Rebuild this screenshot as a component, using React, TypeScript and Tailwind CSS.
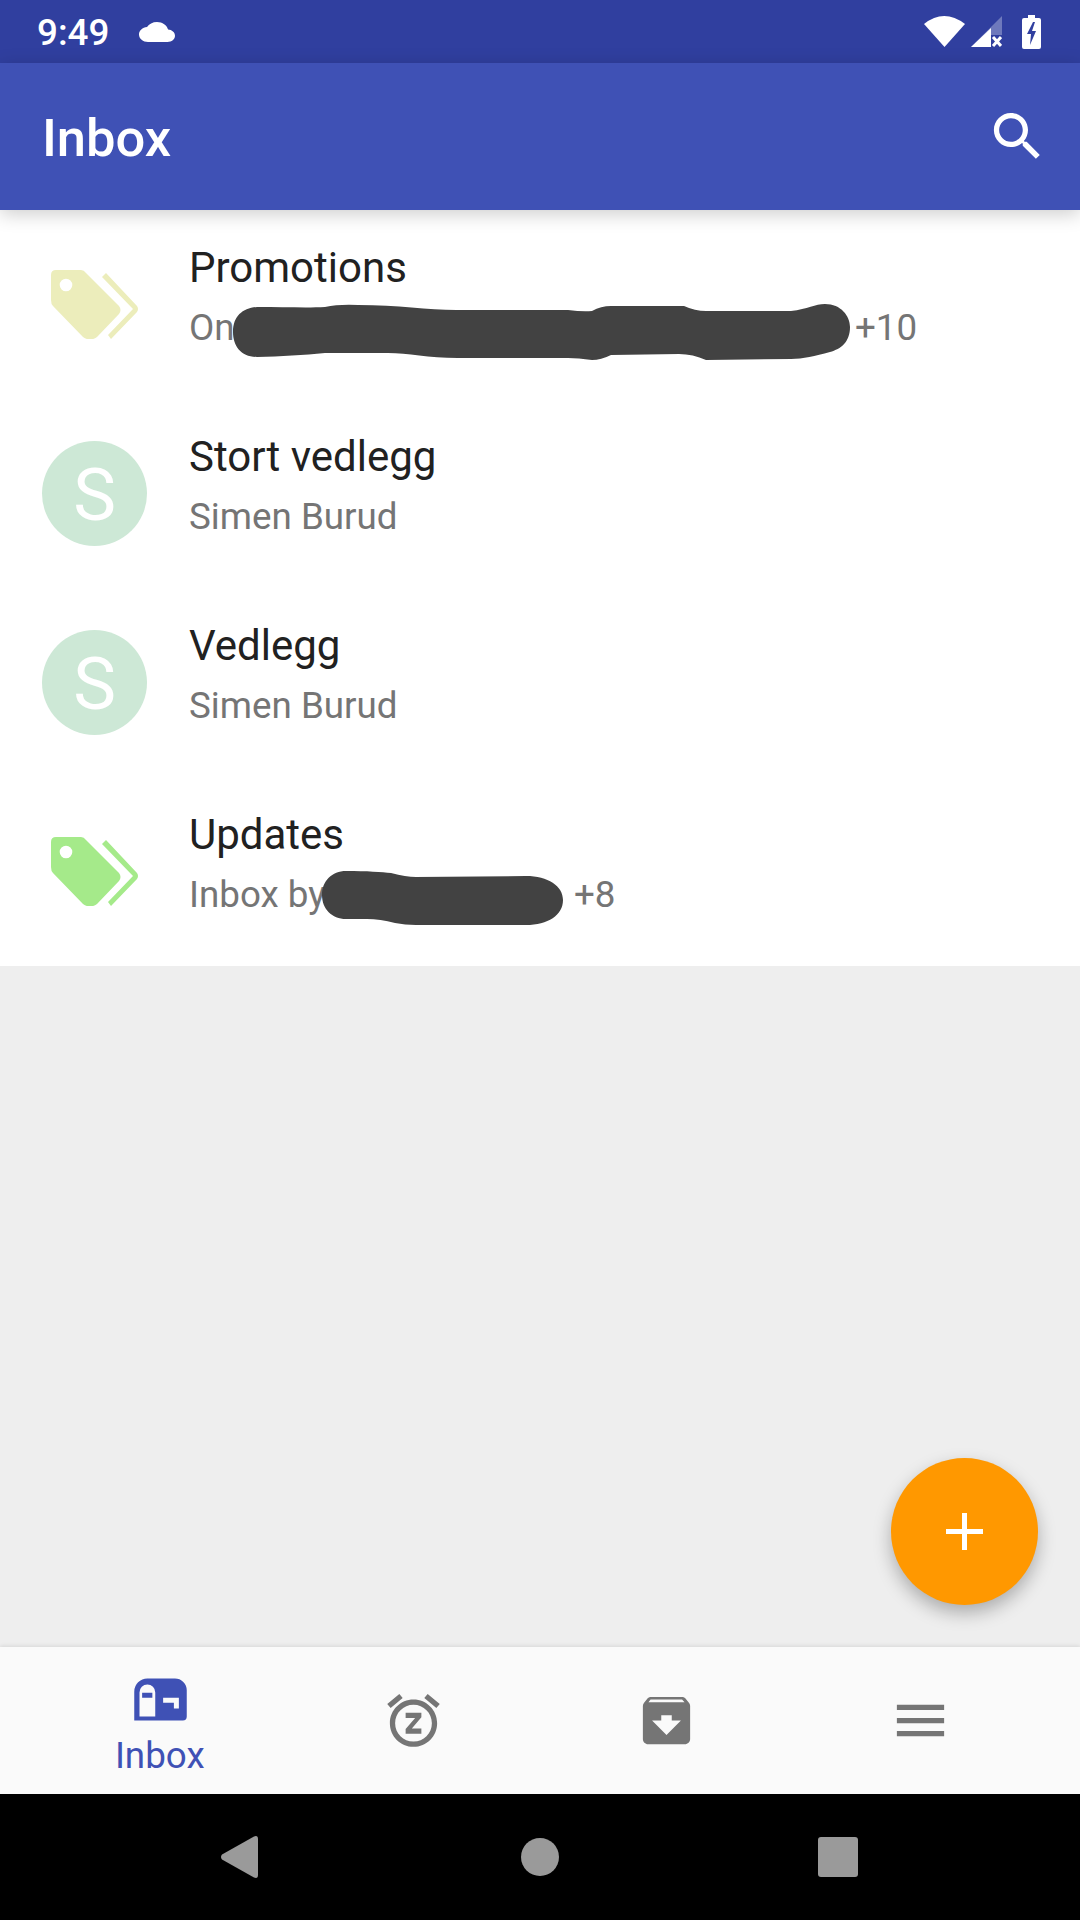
import React from 'react';

const tagBody =
  'M5 0H30Q33 0 35 3L68 36Q71 40 68 44L46 67Q39 72 32 67L2 36Q0 34 0 30V5Q0 0 5 0ZM15 8.7A6.3 6.3 0 1 0 15 21.3A6.3 6.3 0 1 0 15 8.7Z';
const tagChevron = 'M55 3L86 36Q88 39 86 42L60 69L57 65L82 39L51 7Z';

const TagIcon = ({ color }: { color: string }) => (
  <svg width="87" height="69" viewBox="0 0 87 69" fill={color}>
    <path fillRule="evenodd" d={tagBody} />
    <path d={tagChevron} />
  </svg>
);

const Avatar = () => (
  <div className="w-[105px] h-[105px] rounded-full bg-[#cde8d6] flex items-center justify-center text-white text-[72px] leading-none">
    <span className="mt-[4px]">S</span>
  </div>
);

const Icon = ({ d, className }: { d: string; className: string }) => (
  <svg viewBox="0 0 24 24" fill="currentColor" className={className}>
    <path d={d} />
  </svg>
);

// Scribbled-out parts of the subtitles
const BlobLong = () => (
  <svg width="617" height="56" viewBox="0 0 617 56" fill="#424242" className="-mt-[4px] -mb-[12px] shrink-0">
    <path d="M0 28C0 12 10 4 24 3C50 3 75 4 92 3Q106 0 125 1C165 1 195 6 223 6L335 6Q350 8 359 7Q368 2 378 2L451 2Q462 7 473 7L558 7C575 5 582 0 592 0C608 0 617 12 617 23C617 38 608 45 597 48C582 52 570 55 558 55L473 56Q460 50 446 50L378 51Q368 56 359 56Q345 54 335 54L225 54C195 54 175 49 155 49L92 49Q60 52 24 53C8 53 0 42 0 28Z" />
  </svg>
);

const BlobShort = () => (
  <svg width="242" height="55" viewBox="0 0 242 55" fill="#424242" className="-mt-[4px] -mb-[12px] shrink-0">
    <path d="M0 24C0 10 10 0 24 0C45 0 60 1 69 2Q84 6 94 6L204 5C226 5 241 15 241 29C241 44 226 54 204 54L94 54Q83 54 73 52Q58 48 45 48L24 48C10 48 0 38 0 24Z" />
  </svg>
);

const Row = ({
  icon,
  title,
  subtitle,
}: {
  icon: React.ReactNode;
  title: string;
  subtitle: React.ReactNode;
}) => (
  <div className="h-[189px] flex items-center">
    <div className="w-[189px] pl-[42px] shrink-0">
      <div className="w-[105px] flex justify-center">{icon}</div>
    </div>
    <div className="flex flex-col pb-[17px]">
      <div className="text-[42px] leading-[56px] text-[#212121]">{title}</div>
      <div className="mt-[7px] h-[50px] flex items-center text-[36.75px] text-[#757575] whitespace-nowrap">
        {subtitle}
      </div>
    </div>
  </div>
);

export default function App() {
  return (
    <div className="w-[1080px] h-[1920px] flex flex-col overflow-hidden bg-[#eeeeee] font-['Roboto',sans-serif]">
      {/* Status bar */}
      <div className="h-[63px] bg-[#303f9f] flex items-center justify-between pl-[37px] pr-[39px] text-white shrink-0">
        <div className="flex items-center gap-[30px]">
          <span className="text-[36.75px] font-medium leading-none mt-[4px]">9:49</span>
          <svg width="36" height="20" viewBox="0 4 24 16" preserveAspectRatio="none" fill="currentColor">
            <path d="M19.35 10.04C18.67 6.59 15.64 4 12 4 9.11 4 6.6 5.64 5.35 8.04 2.34 8.36 0 10.91 0 14c0 3.31 2.69 6 6 6h13c2.76 0 5-2.24 5-5 0-2.64-2.05-4.78-4.65-4.96z" />
          </svg>
        </div>
        <div className="flex items-center">
          <svg width="41" height="31" viewBox="0 0 41 31" fill="white">
            <path d="M0 8Q20 -8 41 8L20.5 31Z" />
          </svg>
          <svg width="31" height="31" viewBox="0 0 31 31" className="ml-[6px]">
            <path d="M31 0V31H0Z" fill="white" fillOpacity="0.3" />
            <path d="M20 12V31H0Z" fill="white" />
            <path d="M20 19H31V31H20Z" fill="#303f9f" />
            <path d="M22 21L30 30M30 21L22 30" stroke="white" strokeWidth="3" />
          </svg>
          <svg width="19" height="34" viewBox="0 0 19 34" fill="white" className="ml-[20px]">
            <path
              fillRule="evenodd"
              d="M6 0H13V3H17Q19 3 19 5V32Q19 34 17 34H2Q0 34 0 32V5Q0 3 2 3H6ZM11 7L5 19H9L8 30L14 16H10L13 7Z"
            />
          </svg>
        </div>
      </div>

      {/* App bar */}
      <div className="relative z-10 h-[147px] bg-[#3f51b5] flex items-center justify-between pl-[42px] pr-[31px] text-white shrink-0 shadow-[0_4px_18px_rgba(0,0,0,0.2)]">
        <span className="text-[52.5px] font-medium leading-none mt-[3px]">Inbox</span>
        <Icon
          className="w-[63px] h-[63px]"
          d="M15.5 14h-.79l-.28-.27C15.41 12.59 16 11.11 16 9.5 16 5.91 13.09 3 9.5 3S3 5.91 3 9.5 5.91 16 9.5 16c1.61 0 3.09-.59 4.23-1.57l.27.28v.79l5 4.99L20.49 19l-4.99-5zm-6 0C7.01 14 5 11.99 5 9.5S7.01 5 9.5 5 14 7.01 14 9.5 11.99 14 9.5 14z"
        />
      </div>

      {/* Content */}
      <div className="relative flex-1">
        <div className="bg-white">
          <Row
            icon={<TagIcon color="#ecedbb" />}
            title="Promotions"
            subtitle={
              <>
                <span className="w-[44px]">On</span>
                <BlobLong />
                <span className="ml-[5px]">+10</span>
              </>
            }
          />
          <Row icon={<Avatar />} title="Stort vedlegg" subtitle="Simen Burud" />
          <Row icon={<Avatar />} title="Vedlegg" subtitle="Simen Burud" />
          <Row
            icon={<TagIcon color="#a5ea8a" />}
            title="Updates"
            subtitle={
              <>
                <span className="w-[133px]">Inbox by</span>
                <BlobShort />
                <span className="ml-[10px]">+8</span>
              </>
            }
          />
        </div>
        <div className="absolute right-[42px] bottom-[42px] w-[147px] h-[147px] rounded-full bg-[#ff9800] flex items-center justify-center shadow-[0_8px_18px_rgba(0,0,0,0.28)]">
          <svg width="37" height="37" viewBox="0 0 37 37" fill="white">
            <path d="M16 0H21V16H37V21H21V37H16V21H0V16H16Z" />
          </svg>
        </div>
      </div>

      {/* Bottom navigation */}
      <div className="relative h-[147px] bg-[#fafafa] grid grid-cols-4 px-[33px] shrink-0 text-[#757575] shadow-[0_-1px_4px_rgba(0,0,0,0.1)]">
        <div className="flex flex-col items-center pt-[21px] text-[#3f51b5]">
          <svg viewBox="0 0 24 24" fill="currentColor" className="w-[63px] h-[63px] ml-[2px]">
            <path
              fillRule="evenodd"
              d="M7 4H17.500A4.500 4.500 0 0 1 22 8.500V18.500A1.500 1.500 0 0 1 20.500 20H2V9A5 5 0 0 1 7 4ZM7 6.300A3 3 0 0 0 4 9.300V18.500H10V9.300A3 3 0 0 0 7 6.300ZM5 9.400V11.300H8.900V9.400ZM13 11.300V13.200H17.100V15.400H19V11.300Z"
            />
          </svg>
          <span className="text-[36.75px] leading-none mt-[7px]">Inbox</span>
        </div>
        <div className="flex items-center justify-center">
          <Icon
            className="w-[63px] h-[63px]"
            d="M9 11h3.63L9 15.2V17h6v-2h-3.63L15 10.8V9H9v2zm13-5.28l-4.6-3.86-1.29 1.53 4.6 3.86L22 5.72zM7.88 3.39L6.6 1.86 2 5.71l1.29 1.53 4.59-3.85zM12 4c-4.97 0-9 4.03-9 9s4.02 9 9 9c4.97 0 9-4.03 9-9s-4.03-9-9-9zm0 16c-3.86 0-7-3.14-7-7s3.14-7 7-7 7 3.14 7 7-3.14 7-7 7z"
          />
        </div>
        <div className="flex items-center justify-center">
          <Icon
            className="w-[63px] h-[63px]"
            d="M20.54 5.23l-1.39-1.68C18.88 3.21 18.47 3 18 3H6c-.47 0-.88.21-1.16.55L3.46 5.23C3.17 5.57 3 6.02 3 6.5V19c0 1.1.9 2 2 2h14c1.1 0 2-.9 2-2V6.5c0-.48-.17-.93-.46-1.27zM12 17.5L6.5 12H10v-2h4v2h3.5L12 17.5zM5.12 5l.81-1h12l.94 1H5.12z"
          />
        </div>
        <div className="flex items-center justify-center">
          <Icon className="w-[63px] h-[63px]" d="M3 18h18v-2H3v2zm0-5h18v-2H3v2zm0-7v2h18V6H3z" />
        </div>
      </div>

      {/* System navigation */}
      <div className="relative h-[126px] bg-black shrink-0 flex items-center justify-center">
        <div className="grid grid-cols-3 w-[894px] justify-items-center items-center text-[#9a9a9a]">
          <svg width="37" height="42" viewBox="0 0 37 42" fill="currentColor" className="-ml-[6px]">
            <path d="M1 18.500L33 0.500Q37 -1 37 3V39Q37 43 33 41.500L1 23.500Q-1 21 1 18.500Z" />
          </svg>
          <div className="w-[38px] h-[38px] rounded-full bg-[#9a9a9a]" />
          <div className="w-[40px] h-[40px] rounded-[3px] bg-[#9a9a9a]" />
        </div>
      </div>
    </div>
  );
}
